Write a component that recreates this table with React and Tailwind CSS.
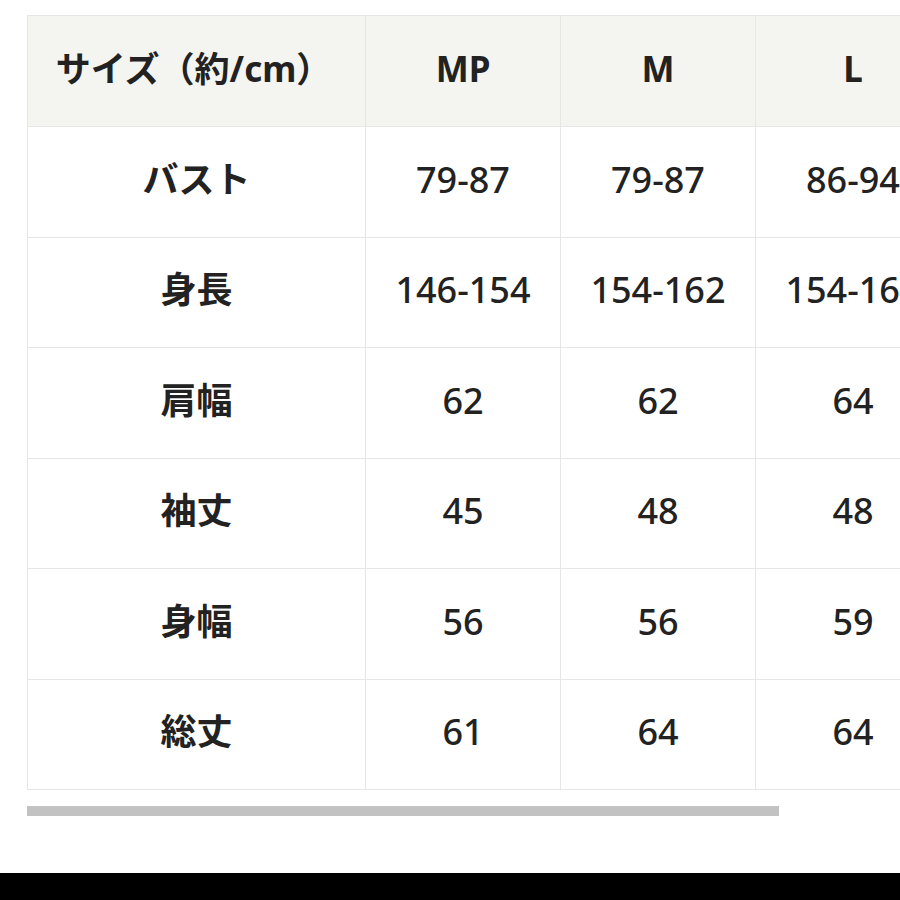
import React from "react";

const header = ["サイズ（約/cm）", "MP", "M", "L"];
const rows = [
  ["バスト", "79-87", "79-87", "86-94"],
  ["身長", "146-154", "154-162", "154-162"],
  ["肩幅", "62", "62", "64"],
  ["袖丈", "45", "48", "48"],
  ["身幅", "56", "56", "59"],
  ["総丈", "61", "64", "64"],
];

const font = { fontFamily: '"Noto Sans", "Noto Sans CJK JP", sans-serif' };

export default function App() {
  return (
    <div className="w-[900px] h-[900px] bg-white flex flex-col overflow-hidden" style={font}>
      <div className="pl-[27px] pt-[15px] flex-1 flex flex-col">
        <div className="w-[873px] overflow-hidden">
          <div className="grid grid-cols-[338px_195px_195px_195px] w-[923px] border-l border-t border-[#e6e6e4] text-[#222]">
            {header.map((h, i) => (
              <div
                key={"h" + i}
                className={`h-[111px] pb-[4px] flex items-center justify-center bg-[#f4f4f0] border-r border-b border-[#e6e6e4] font-bold ${i === 0 ? "text-[35px] pr-[6px]" : "text-[35px]"}`}
              >
                {h}
              </div>
            ))}
            {rows.map((r, ri) =>
              r.map((c, ci) => (
                <div
                  key={ri + "-" + ci}
                  className={`h-[110.5px] pb-[4px] flex items-center justify-center bg-white border-r border-b border-[#e6e6e4] ${ci === 0 ? "font-bold text-[36px]" : "font-medium text-[36px]"}`}
                >
                  {c}
                </div>
              ))
            )}
          </div>
        </div>
        <div className="mt-[16px] w-[752px] h-[10px] bg-[#c2c2c2]" />
      </div>
      <div className="h-[27px] bg-black" />
    </div>
  );
}
